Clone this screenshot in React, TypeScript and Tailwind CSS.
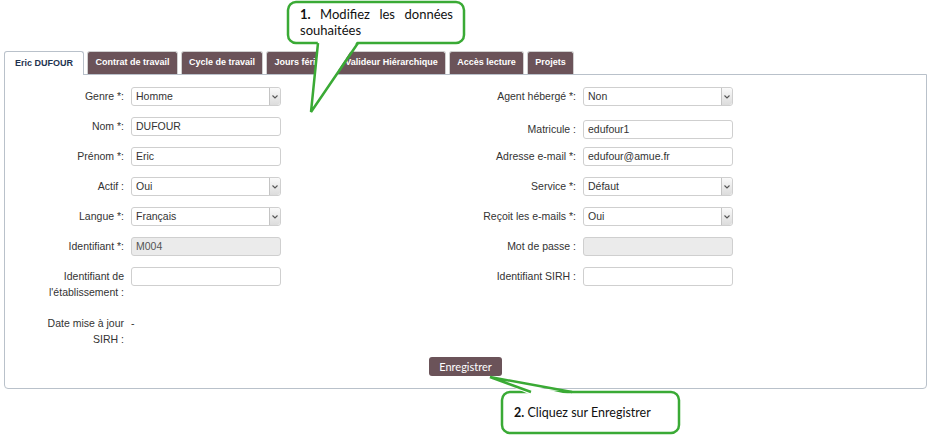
import React from "react";

const tabs = [
  "Contrat de travail",
  "Cycle de travail",
  "Jours fériés",
  "Valideur Hiérarchique",
  "Accès lecture",
  "Projets",
];

function Chevron() {
  return (
    <span className="flex h-full w-[11px] items-center justify-center border-l border-[#c4c4c4] bg-gradient-to-b from-[#fafafa] to-[#dcdcdc] rounded-r-[3px]">
      <svg width="6" height="4" viewBox="0 0 6 4">
        <path d="M0.5 0.5 L3 3 L5.5 0.5" fill="none" stroke="#555" strokeWidth="1.1" />
      </svg>
    </span>
  );
}

function Field({ value, select, disabled }: { value?: string; select?: boolean; disabled?: boolean }) {
  return (
    <div
      className={`flex h-[19px] w-[150px] items-center rounded-[3px] border border-[#cfcfcf] ${
        disabled ? "bg-[#ebebeb] text-[#555]" : "bg-white text-[#333]"
      }`}
    >
      <span className="flex-1 truncate pl-[4px] text-[10.5px] leading-none">{value}</span>
      {select && <Chevron />}
    </div>
  );
}

function Row({
  label,
  children,
  width,
  className = "",
}: {
  label: React.ReactNode;
  children: React.ReactNode;
  width: string;
  className?: string;
}) {
  return (
    <div className={`flex items-start gap-[7px] ${className}`}>
      <div className={`${width} pt-[1px] text-right text-[10.5px] leading-[16px] text-[#333]`}>{label}</div>
      {children}
    </div>
  );
}

export default function App() {
  return (
    <div className="relative h-[437px] w-[935px] overflow-hidden bg-white font-['Liberation_Sans',Arial,sans-serif]">
      <div className="w-[927px] pl-[4px] pt-[51px]">
        {/* tabs */}
        <div className="flex items-end gap-[3px]">
          <div className="relative z-10 -mb-px flex h-[24px] items-center rounded-t-[3px] border border-b-0 border-[#b9c1ca] bg-white px-[10px] text-[9px] font-bold text-[#1f3350]">
            Eric DUFOUR
          </div>
          {tabs.map((t) => (
            <div
              key={t}
              className="flex h-[23px] items-center rounded-t-[3px] border border-b-0 border-[#d0d0d0] bg-[#6b5359] pl-[7.5px] pr-[7px] text-[9px] font-bold text-white"
            >
              {t}
            </div>
          ))}
        </div>

        {/* panel */}
        <div className="rounded-b-[4px] border border-[#b9c1ca] bg-white pb-[12px] pt-[12px]">
          <div className="flex">
            <div className="flex flex-col gap-[11px]">
              <Row label="Genre *:" width="w-[119px]">
                <Field value="Homme" select />
              </Row>
              <Row label="Nom *:" width="w-[119px]">
                <Field value="DUFOUR" />
              </Row>
              <Row label="Prénom *:" width="w-[119px]">
                <Field value="Eric" />
              </Row>
              <Row label="Actif :" width="w-[119px]">
                <Field value="Oui" select />
              </Row>
              <Row label="Langue *:" width="w-[119px]">
                <Field value="Français" select />
              </Row>
              <Row label="Identifiant *:" width="w-[119px]">
                <Field value="M004" disabled />
              </Row>
              <Row
                label={
                  <>
                    Identifiant de
                    <br />
                    l'établissement :
                  </>
                }
                width="w-[119px]"
              >
                <Field />
              </Row>
              <Row
                label={
                  <>
                    Date mise à jour
                    <br />
                    SIRH :
                  </>
                }
                width="w-[119px]"
                className="mt-[3px]"
              >
                <span className="pt-[1px] text-[10.5px] leading-[16px] text-[#333]">-</span>
              </Row>
            </div>

            <div className="ml-[155px] flex flex-col gap-[11px]">
              <Row label="Agent hébergé *:" width="w-[140px]">
                <Field value="Non" select />
              </Row>
              <Row label="Matricule :" width="w-[140px]" className="translate-y-[3px]">
                <Field value="edufour1" />
              </Row>
              <Row label="Adresse e-mail *:" width="w-[140px]">
                <Field value="edufour@amue.fr" />
              </Row>
              <Row label="Service *:" width="w-[140px]">
                <Field value="Défaut" select />
              </Row>
              <Row label="Reçoit les e-mails *:" width="w-[140px]">
                <Field value="Oui" select />
              </Row>
              <Row label="Mot de passe :" width="w-[140px]">
                <Field disabled />
              </Row>
              <Row label="Identifiant SIRH :" width="w-[140px]">
                <Field />
              </Row>
            </div>
          </div>

          <div className="mt-[10px] flex justify-center">
            <button className="h-[19px] rounded-[3px] bg-[#6b5359] px-[10px] font-['Lato',sans-serif] text-[11px] leading-none text-white">
              Enregistrer
            </button>
          </div>
        </div>
      </div>

      {/* callouts */}
      <svg className="pointer-events-none absolute left-0 top-0" width="935" height="437" viewBox="0 0 935 437">
        <rect x="288" y="2" width="176" height="41" rx="8" fill="white" stroke="#3aaa35" strokeWidth="2.5" />
        <polygon points="318,40 358,40 311,112" fill="white" />
        <polyline points="318,43 311,112 358,43" fill="none" stroke="#3aaa35" strokeWidth="2.5" strokeLinejoin="miter" />

        <rect x="502" y="392" width="177" height="41" rx="8" fill="white" stroke="#3aaa35" strokeWidth="2.5" />
        <polygon points="531,395 572,395 490,377" fill="white" />
        <polyline points="531,392 490,377 572,392" fill="none" stroke="#3aaa35" strokeWidth="2.5" />
      </svg>
      <div className="absolute left-[300px] top-[6px] w-[153px] text-justify font-['Lato',sans-serif] text-[13px] leading-[16px] text-[#111]">
        <b>1.</b>&nbsp;Modifiez les données souhaitées
      </div>
      <div className="absolute left-[514px] top-[405px] font-['Lato',sans-serif] text-[12.5px] leading-[16px] text-[#111]">
        <b>2.</b> Cliquez sur Enregistrer
      </div>
    </div>
  );
}
